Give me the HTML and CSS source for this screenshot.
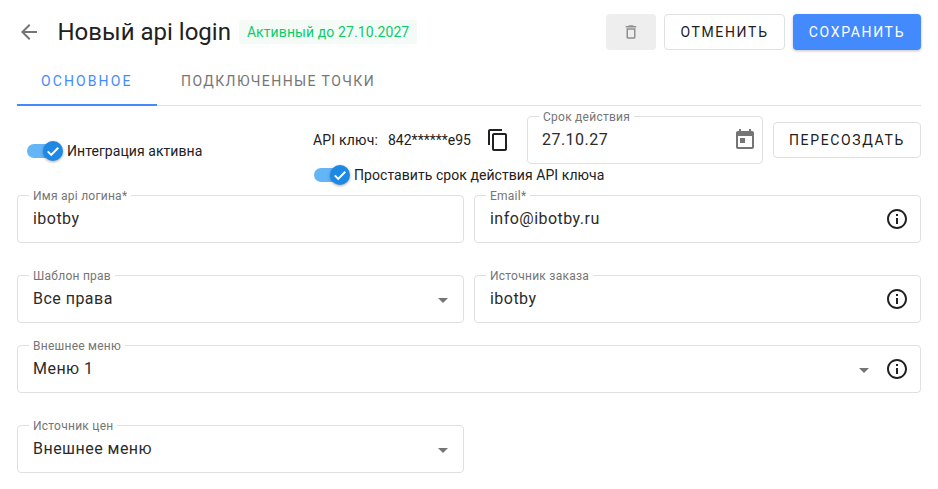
FILE: index.html
```html
<!DOCTYPE html>
<html lang="ru">
<head>
<meta charset="utf-8">
<title>Новый api login</title>
<link rel="stylesheet" href="styles.css">
</head>
<body>
<main class="page">
  <header class="header">
    <button class="icon-btn back" type="button" aria-label="Назад">
      <svg viewBox="0 0 24 24" width="24" height="24"><path d="M20 11H7.83l5.59-5.59L12 4l-8 8 8 8 1.41-1.41L7.83 13H20v-2z"/></svg>
    </button>
    <h1 class="title">Новый api login</h1>
    <span class="chip">Активный до 27.10.2027</span>
    <div class="actions">
      <button class="btn btn-delete" type="button" aria-label="Удалить">
        <svg viewBox="0 0 24 24" width="18" height="18"><path d="M16 9v10H8V9h8m-1.5-6h-5l-1 1H5v2h14V4h-3.5l-1-1zM18 7H6v12c0 1.1.9 2 2 2h8c1.1 0 2-.9 2-2V7z"/></svg>
      </button>
      <button class="btn btn-outline btn-cancel" type="button">Отменить</button>
      <button class="btn btn-primary" type="button">Сохранить</button>
    </div>
  </header>

  <nav class="tabs">
    <a class="tab tab-active">Основное</a>
    <a class="tab">Подключенные точки</a>
  </nav>

  <section class="top">
    <label class="toggle-row toggle-main">
      <span class="switch"><span class="knob"><svg viewBox="0 0 24 24" width="18" height="18"><path d="M5 12.5l4.6 4.6L19 7.7" fill="none" stroke="#fff" stroke-width="2.6"/></svg></span></span>
      <span>Интеграция активна</span>
    </label>
    <div class="key-block">
      <div class="key-row">
        <span class="key-label">API ключ:</span>
        <span class="key-value">842******e95</span>
        <svg class="copy" viewBox="0 0 24 24" width="24" height="24"><path d="M16 1H4c-1.1 0-2 .9-2 2v14h2V3h12V1zm3 4H8c-1.1 0-2 .9-2 2v14c0 1.1.9 2 2 2h11c1.1 0 2-.9 2-2V7c0-1.1-.9-2-2-2zm0 16H8V7h11v14z"/></svg>
        <div class="field field-date">
          <span class="field-label">Срок действия</span>
          <span class="field-value">27.10.27</span>
          <svg class="calendar" viewBox="0 0 24 24" width="24" height="24"><path d="M19 3h-1V1h-2v2H8V1H6v2H5c-1.11 0-1.99.9-1.99 2L3 19c0 1.1.89 2 2 2h14c1.1 0 2-.9 2-2V5c0-1.1-.9-2-2-2zm0 16H5V8h14v11zM7 10h5v5H7z"/></svg>
        </div>
        <button class="btn btn-outline btn-regen" type="button">Пересоздать</button>
      </div>
      <label class="toggle-row toggle-key">
        <span class="switch"><span class="knob"><svg viewBox="0 0 24 24" width="18" height="18"><path d="M5 12.5l4.6 4.6L19 7.7" fill="none" stroke="#fff" stroke-width="2.6"/></svg></span></span>
        <span>Проставить срок действия API ключа</span>
      </label>
    </div>
  </section>

  <section class="form">
    <div class="field">
      <span class="field-label">Имя api логина*</span>
      <span class="field-value">ibotby</span>
    </div>
    <div class="field">
      <span class="field-label">Email*</span>
      <span class="field-value">info@ibotby.ru</span>
      <svg class="info" viewBox="0 0 24 24" width="24" height="24"><path d="M11 7h2v2h-2zm0 4h2v6h-2zm1-9C6.48 2 2 6.48 2 12s4.48 10 10 10 10-4.48 10-10S17.52 2 12 2zm0 18c-4.41 0-8-3.59-8-8s3.59-8 8-8 8 3.59 8 8-3.59 8-8 8z"/></svg>
    </div>
    <div class="field">
      <span class="field-label">Шаблон прав</span>
      <span class="field-value">Все права</span>
      <span class="caret"></span>
    </div>
    <div class="field">
      <span class="field-label">Источник заказа</span>
      <span class="field-value">ibotby</span>
      <svg class="info" viewBox="0 0 24 24" width="24" height="24"><path d="M11 7h2v2h-2zm0 4h2v6h-2zm1-9C6.48 2 2 6.48 2 12s4.48 10 10 10 10-4.48 10-10S17.52 2 12 2zm0 18c-4.41 0-8-3.59-8-8s3.59-8 8-8 8 3.59 8 8-3.59 8-8 8z"/></svg>
    </div>
    <div class="field field-wide">
      <span class="field-label">Внешнее меню</span>
      <span class="field-value">Меню 1</span>
      <span class="caret caret-info"></span>
      <svg class="info" viewBox="0 0 24 24" width="24" height="24"><path d="M11 7h2v2h-2zm0 4h2v6h-2zm1-9C6.48 2 2 6.48 2 12s4.48 10 10 10 10-4.48 10-10S17.52 2 12 2zm0 18c-4.41 0-8-3.59-8-8s3.59-8 8-8 8 3.59 8 8-3.59 8-8 8z"/></svg>
    </div>
    <div class="field field-last">
      <span class="field-label">Источник цен</span>
      <span class="field-value">Внешнее меню</span>
      <span class="caret"></span>
    </div>
  </section>
</main>
</body>
</html>
```
FILE: styles.css
```css
* { box-sizing: border-box; }
html, body { margin: 0; height: 100%; overflow: hidden; background: #fff; }
body { font-family: Roboto, "Liberation Sans", sans-serif; color: #212121; font-size: 14px; }
button { font-family: inherit; }

.page { padding: 14px 17px 0; }

.header { display: flex; align-items: center; height: 36px; }
.icon-btn { border: 0; background: none; padding: 0; display: flex; }
.back { width: 24px; fill: #757575; }
.title { margin: 0 0 0 16.5px; font-size: 24px; font-weight: 400; line-height: 36px; color: #212121; }
.chip { margin-left: 8px; height: 24px; line-height: 24px; padding: 0 8px; border-radius: 4px; background: #f4fbf6; color: #0bcb6b; font-size: 14px; letter-spacing: .1px; }
.actions { margin-left: auto; display: flex; gap: 8px; }

.btn { height: 36px; border-radius: 4px; font-size: 14px; font-weight: 400; letter-spacing: 1.65px; text-transform: uppercase; display: flex; align-items: center; justify-content: center; padding: 0; }
.btn-delete { width: 50px; border: 0; background: #eeeeee; fill: #8f8f8f; }
.btn-outline { border: 1px solid #e0e0e0; background: #fff; color: #212121; }
.btn-cancel { width: 121px; }
.btn-primary { width: 128px; border: 0; background: #448aff; color: #fff; box-shadow: 0 1px 3px rgba(0,0,0,.25); }

.tabs { display: flex; margin-top: 8px; height: 48px; border-bottom: 1px solid #e0e0e0; }
.tab { height: 48px; padding: 0 24px; line-height: 46px; font-size: 14px; letter-spacing: 1.42px; text-transform: uppercase; color: #757575; }
.tab-active { color: #448aff; border-bottom: 2px solid #448aff; width: 140px; letter-spacing: 2.1px; }

.top { display: flex; justify-content: space-between; height: 89px; }
.toggle-row { display: flex; align-items: center; font-size: 14px; letter-spacing: .06px; }
.toggle-main { margin: 35px 0 0 10px; height: 20px; }
.switch { position: relative; display: block; width: 40px; height: 20px; flex: none; }
.switch::before { content: ""; position: absolute; left: 0; top: 3px; width: 34px; height: 14px; border-radius: 7px; background: #64b5f6; }
.knob { position: absolute; left: 16px; top: 0; width: 20px; height: 20px; border-radius: 50%; background: #1e88e5; box-shadow: 0 1px 3px rgba(0,0,0,.35); display: flex; align-items: center; justify-content: center; }
.key-block { width: 608px; padding-top: 10px; }
.key-row { display: flex; align-items: center; height: 48px; }
.key-label { width: 75px; font-size: 14px; letter-spacing: .2px; color: #212121; }
.key-value { width: 98px; font-size: 14px; color: #212121; }
.copy { flex: none; fill: #212121; margin-right: 17px; }
.toggle-key { height: 20px; margin: 1px 0 0 1px; }

.form { display: grid; grid-template-columns: 447px 447px; column-gap: 10px; grid-auto-rows: 48px; row-gap: 32px; }
.field { position: relative; height: 48px; border: 1px solid #e0e0e0; border-radius: 4px; display: flex; align-items: center; padding: 0 15px; }
.field-wide { grid-column: 1 / -1; margin-top: -10px; }
.field-last { margin-top: -10px; }
.field-label { position: absolute; left: 11px; top: -7px; padding: 0 4px; background: #fff; font-size: 12px; line-height: 14px; letter-spacing: .25px; color: #757575; }
.field-value { font-size: 16px; letter-spacing: .47px; color: #2b2b2b; margin-top: -1px; }
.info { position: absolute; right: 11px; top: 11px; fill: #212121; }
.caret { position: absolute; right: 15px; top: 22px; width: 0; height: 0; border-left: 5px solid transparent; border-right: 5px solid transparent; border-top: 5px solid #757575; }
.caret-info { right: 51px; }

.field-date { flex: none; width: 236px; padding-left: 14px; }
.calendar { position: absolute; right: 5px; top: 11px; fill: #757575; }
.btn-regen { width: 148px; margin-left: 10px; flex: none; }
```
